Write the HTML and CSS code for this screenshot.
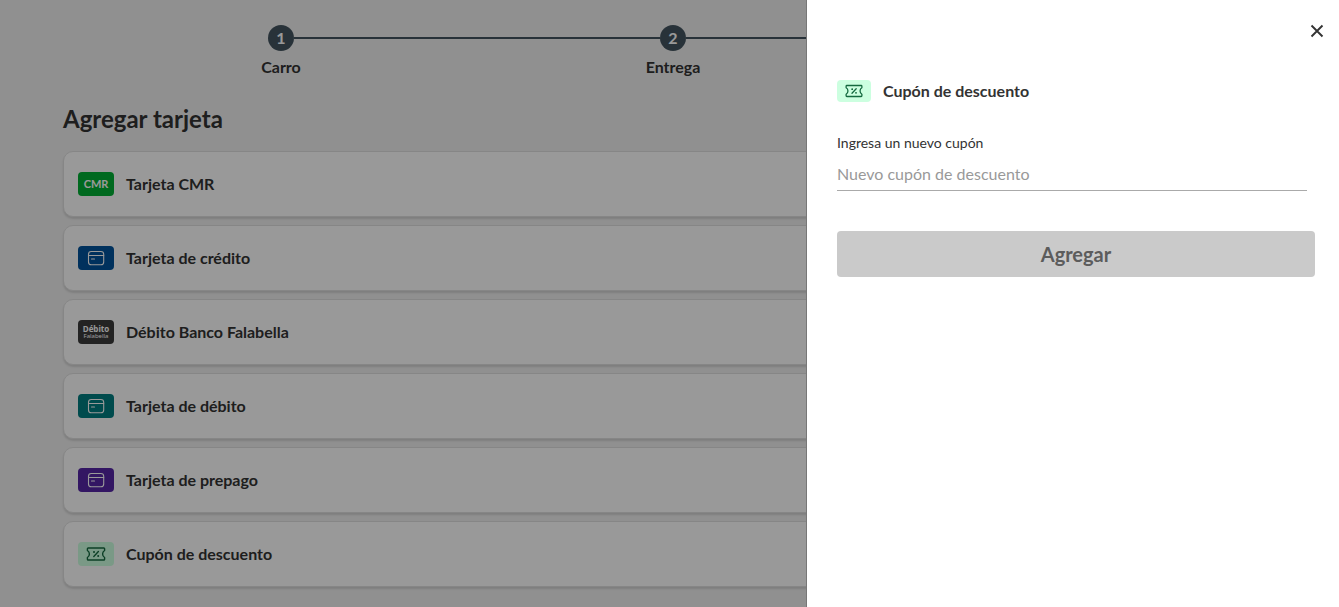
FILE: index.html
```html
<!DOCTYPE html>
<html lang="es">
<head>
<meta charset="utf-8">
<meta name="viewport" content="width=device-width, initial-scale=1">
<title>Agregar tarjeta</title>
<link rel="stylesheet" href="styles.css">
</head>
<body>
<svg class="sprite" aria-hidden="true">
  <symbol id="card" viewBox="0 0 36 24">
    <g fill="none" stroke="currentColor" stroke-width="1.1" stroke-linecap="round">
      <rect x="10.5" y="5.5" width="15.2" height="13.2" rx="2.8"/>
      <path d="M10.5 9.5h15.2M13.5 13h3"/>
    </g>
  </symbol>
  <symbol id="coupon" viewBox="0 0 36 24">
    <g fill="none" stroke="currentColor" stroke-width="1.4" stroke-linejoin="round" stroke-linecap="round">
      <path d="M10.2 6h15.6q.8 0 .8.8v1.7q-2 1.2-2 3.5t2 3.5v1.7q0 .8-.8.8H10.2q-.8 0-.8-.8v-1.7q2-1.2 2-3.5t-2-3.5V6.8q0-.8.8-.8z"/>
      <path d="M15.8 14.4l4.6-4.8"/>
    </g>
    <circle cx="16" cy="10" r="1" fill="currentColor"/>
    <circle cx="20.2" cy="14" r="1" fill="currentColor"/>
  </symbol>
</svg>

<main class="page">
  <ol class="steps">
    <li class="step"><span class="step-number">1</span><span class="step-label">Carro</span></li>
    <li class="step"><span class="step-number">2</span><span class="step-label">Entrega</span></li>
  </ol>
  <h1 class="title">Agregar tarjeta</h1>
  <ul class="methods">
    <li><button type="button" class="method"><span class="badge badge-cmr">CMR</span>Tarjeta CMR</button></li>
    <li><button type="button" class="method"><svg class="badge badge-credit" aria-hidden="true"><use href="#card"/></svg>Tarjeta de crédito</button></li>
    <li><button type="button" class="method"><span class="badge badge-bank"><b class="bank-top">Débito</b><span class="bank-bottom">Falabella</span></span>Débito Banco Falabella</button></li>
    <li><button type="button" class="method"><svg class="badge badge-debit" aria-hidden="true"><use href="#card"/></svg>Tarjeta de débito</button></li>
    <li><button type="button" class="method"><svg class="badge badge-prepaid" aria-hidden="true"><use href="#card"/></svg>Tarjeta de prepago</button></li>
    <li><button type="button" class="method"><svg class="badge badge-coupon" aria-hidden="true"><use href="#coupon"/></svg>Cupón de descuento</button></li>
  </ul>
</main>

<div class="overlay">
  <aside class="drawer" role="dialog" aria-labelledby="drawer-title">
    <header class="drawer-bar">
      <button type="button" class="close" aria-label="Cerrar">
        <svg class="close-icon" viewBox="0 0 14 14" aria-hidden="true"><path d="M1.5 1.5l11 11M12.5 1.5l-11 11" fill="none" stroke="currentColor" stroke-width="1.9"/></svg>
      </button>
    </header>
    <h2 class="drawer-title" id="drawer-title"><svg class="badge badge-coupon badge-small" aria-hidden="true"><use href="#coupon"/></svg>Cupón de descuento</h2>
    <form class="form">
      <label class="label" for="coupon-code">Ingresa un nuevo cupón</label>
      <input class="input" id="coupon-code" type="text" placeholder="Nuevo cupón de descuento">
      <button class="submit" type="submit" disabled>Agregar</button>
    </form>
  </aside>
</div>
</body>
</html>
```
FILE: styles.css
```css
* {
  box-sizing: border-box;
}

body {
  margin: 0;
  height: 100vh;
  overflow: hidden;
  background: #f0f0f0;
  color: #333;
  font-family: Lato, "Liberation Sans", sans-serif;
}

button,
input {
  font: inherit;
  color: inherit;
}

.sprite {
  position: absolute;
  width: 0;
  height: 0;
}

.page {
  padding: 25px 63px 0;
}

.steps {
  display: grid;
  grid-template-columns: repeat(3, 1fr);
  margin: 0;
  padding: 0 15px 0 22px;
  list-style: none;
}

.step {
  display: grid;
  grid-template-columns: 1fr 26px 1fr;
  align-items: center;
  row-gap: 6px;
}

.step::before,
.step::after {
  content: "";
  grid-row: 1;
  height: 2px;
  background: #43545f;
}

.step::before {
  grid-column: 1;
}

.step::after {
  grid-column: 3;
}

.step:first-child::before {
  background: none;
}

.step-number {
  grid-column: 2;
  grid-row: 1;
  height: 26px;
  border-radius: 50%;
  background: #43545f;
  color: #fff;
  font-size: 16px;
  font-weight: 700;
  line-height: 26px;
  text-align: center;
}

.step-label {
  grid-column: 1 / -1;
  font-size: 16px;
  font-weight: 700;
  line-height: 20px;
  text-align: center;
}

.title {
  margin: 26px 0 16px;
  font-size: 24px;
  font-weight: 700;
  line-height: 32px;
}

.methods {
  display: grid;
  gap: 8px;
  margin: 0;
  padding: 0;
  list-style: none;
}

.method {
  display: flex;
  align-items: center;
  gap: 12px;
  width: 100%;
  min-height: 66px;
  padding: 0 14px;
  border: 1px solid #e0e0e0;
  border-radius: 10px;
  background: #fff;
  box-shadow: 0 2px 2px rgba(0, 0, 0, 0.12);
  font-size: 16px;
  font-weight: 700;
  line-height: 20px;
  text-align: left;
}

.badge {
  display: flex;
  flex-direction: column;
  align-items: center;
  justify-content: center;
  flex: none;
  width: 36px;
  height: 24px;
  border-radius: 4px;
  color: #fff;
}

.badge-small {
  width: 34px;
  height: 22px;
}

.badge-cmr {
  background: #00b034;
  font-size: 11px;
}

.badge-credit {
  background: #00529b;
}

.badge-bank {
  background: #3b3b3b;
}

.bank-top {
  font: 700 8px/9px "Open Sans", sans-serif;
}

.bank-bottom {
  font: 400 6px/7px "Noto Sans", sans-serif;
}

.badge-debit {
  background: #007d80;
}

.badge-prepaid {
  background: #5526a6;
}

.badge-coupon {
  background: #ccffe0;
  color: #14693f;
}

.overlay {
  position: fixed;
  inset: 0;
  display: flex;
  justify-content: flex-end;
  background: rgba(0, 0, 0, 0.4);
}

.drawer {
  width: 533px;
  max-width: 100%;
  padding: 16px 7px 0 30px;
  border-left: 1px solid #777;
  background: #fff;
}

.drawer-bar {
  display: flex;
  justify-content: flex-end;
}

.close {
  display: grid;
  place-items: center;
  width: 30px;
  height: 30px;
  padding: 0;
  border: 0;
  background: none;
}

.close-icon {
  width: 14px;
  height: 14px;
}

.drawer-title {
  display: flex;
  align-items: center;
  gap: 12px;
  margin: 34px 0 0;
  font-size: 16px;
  font-weight: 700;
  line-height: 20px;
}

.form {
  display: flex;
  flex-direction: column;
  margin: 31px 17px 0 0;
}

.label {
  font-size: 14px;
  line-height: 20px;
}

.input {
  height: 32px;
  margin: 6px 8px 40px 0;
  padding: 0 0 2px;
  border: 0;
  border-bottom: 1px solid #aaa;
  border-radius: 0;
  outline: 0;
  background: none;
  font-size: 16px;
}

.input::placeholder {
  color: #999;
  opacity: 1;
}

.submit {
  height: 46px;
  border: 0;
  border-radius: 4px;
  background: #cacaca;
  color: #5c5c5c;
  font-size: 20px;
  font-weight: 700;
}
```
